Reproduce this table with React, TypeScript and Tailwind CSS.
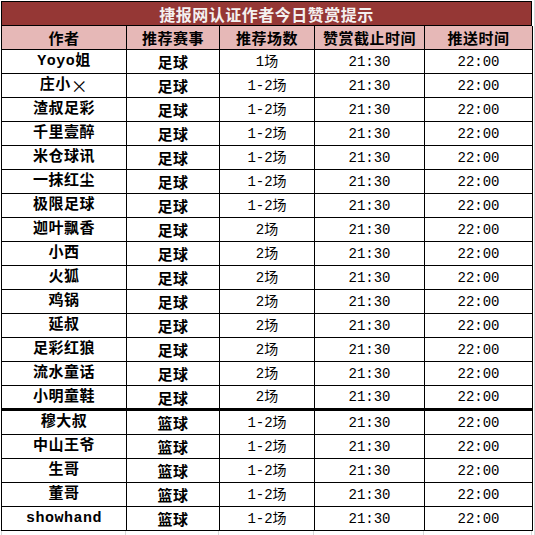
import React from "react";

const rows: [React.ReactNode, string, string][] = [
  ["Yoyo姐", "足球", "1场"],
  [
    <>
      庄小<span className="font-['Noto_Sans_CJK_SC',sans-serif] font-normal text-[17px]">×</span>
    </>,
    "足球",
    "1-2场",
  ],
  ["渣叔足彩", "足球", "1-2场"],
  ["千里壹醉", "足球", "1-2场"],
  ["米仓球讯", "足球", "1-2场"],
  ["一抹红尘", "足球", "1-2场"],
  ["极限足球", "足球", "1-2场"],
  ["迦叶飘香", "足球", "2场"],
  ["小西", "足球", "2场"],
  ["火狐", "足球", "2场"],
  ["鸡锅", "足球", "2场"],
  ["延叔", "足球", "2场"],
  ["足彩红狼", "足球", "2场"],
  ["流水童话", "足球", "2场"],
  ["小明童鞋", "足球", "2场"],
  ["穆大叔", "篮球", "1-2场"],
  ["中山王爷", "篮球", "1-2场"],
  ["生哥", "篮球", "1-2场"],
  ["董哥", "篮球", "1-2场"],
  ["showhand", "篮球", "1-2场"],
];

const mono = "font-['Liberation_Mono','Noto_Sans_CJK_SC',monospace]";

export default function App() {
  return (
    <div className="w-[535px] h-[535px] bg-white overflow-hidden relative">
      <div className="absolute left-[534px] top-0 h-full w-px bg-[#d9d9d9]" />
      <div className="ml-px mt-px w-[531px] border-l border-t border-black text-black">
        <div className="h-[24px] border-r border-b border-black bg-[#953735] flex items-center justify-center text-[16px] font-bold text-[#f4f0ef] font-['Noto_Sans_CJK_SC',sans-serif] tracking-[0.5px]">
          捷报网认证作者今日赞赏提示
        </div>
        <div className="grid grid-cols-[125px_93px_95px_110px_108px] h-[24px] bg-[#e6b8b7] font-['Noto_Sans_CJK_SC',sans-serif] font-bold text-[15px] tracking-[0.5px]">
          {["作者", "推荐赛事", "推荐场数", "赞赏截止时间", "推送时间"].map((h) => (
            <div key={h} className="border-r border-b border-black flex items-center justify-center leading-none">
              {h}
            </div>
          ))}
        </div>
        {rows.map((r, i) => {
          const thick = i === 14;
          const cell = thick
            ? "border-r border-b-[3px] border-black flex items-center justify-center leading-none"
            : "border-r border-b border-black flex items-center justify-center leading-none";
          return (
            <div
              key={i}
              className={
                "grid grid-cols-[125px_93px_95px_110px_108px] " + (thick ? "h-[25px]" : "h-[24px]")
              }
            >
              <div className={cell + " font-bold text-[15px] " + mono + " tracking-[0.5px]"}>{r[0]}</div>
              <div className={cell + " font-bold text-[15px] font-['Noto_Sans_CJK_SC',sans-serif] tracking-[0.5px]"}>{r[1]}</div>
              <div className={cell + " text-[14px] " + mono}>{r[2]}</div>
              <div className={cell + " text-[14px] " + mono}>21:30</div>
              <div className={cell + " text-[14px] " + mono}>22:00</div>
            </div>
          );
        })}
        <div className="grid grid-cols-[125px_93px_95px_110px_108px] h-[6px] -ml-px">
          <div className="border-l border-r border-[#d9d9d9]" />
          <div className="border-r border-[#d9d9d9]" />
          <div className="border-r border-[#d9d9d9]" />
          <div className="border-r border-[#d9d9d9]" />
          <div className="border-r border-[#d9d9d9]" />
        </div>
      </div>
    </div>
  );
}
